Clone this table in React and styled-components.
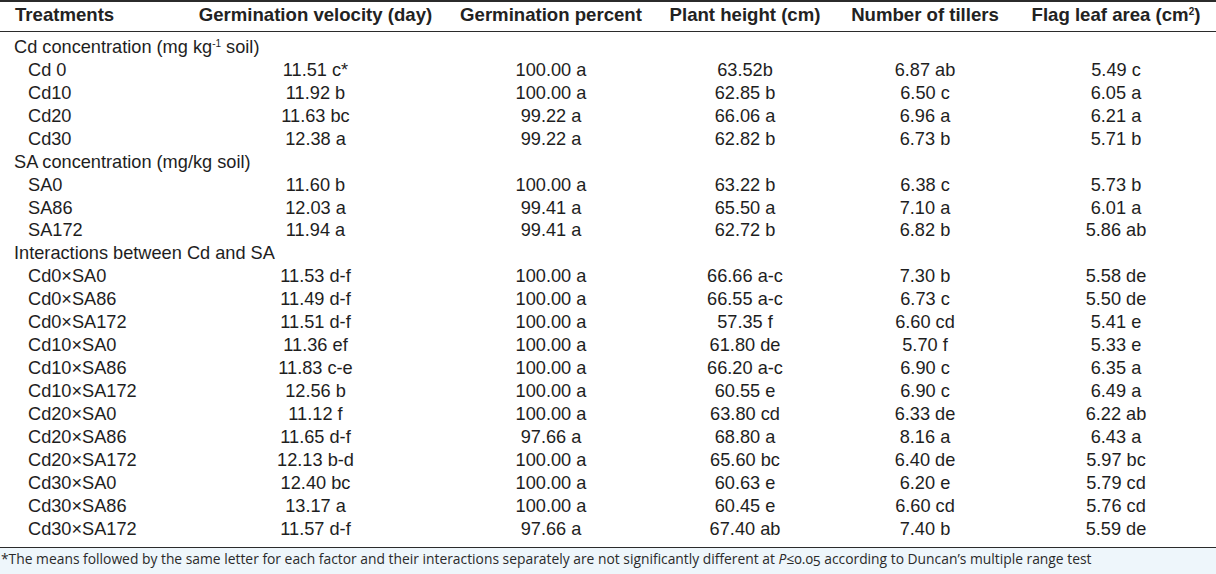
import React from "react";
import styled, { createGlobalStyle } from "styled-components";

const GlobalStyle = createGlobalStyle`
  html, body {
    margin: 0;
    padding: 0;
    background: #ffffff;
  }
  body {
    font-family: "Liberation Sans", Arial, sans-serif;
    color: #1e1e1e;
  }
`;

const columns = "185px 261px 210px 178px 182px 200px";

const TableWrapper = styled.div`
  width: 1216px;
  border-top: 2px solid #2b2b2b;
  font-size: 18.2px;
`;

const HeadRow = styled.div`
  display: grid;
  grid-template-columns: ${columns};
  box-sizing: border-box;
  height: 30px;
  padding-bottom: 3px;
  align-items: center;
  border-bottom: 1.5px solid #2b2b2b;
  font-weight: bold;
  font-size: 18.6px;
  color: #222;
`;

const HeadCell = styled.div`
  text-align: ${(p) => (p.$left ? "left" : "center")};
  padding-left: ${(p) => (p.$left ? "15px" : "0")};
  white-space: nowrap;
`;

const Body = styled.div`
  padding: 4px 0 6px;
  border-bottom: 1px solid #2b2b2b;
`;

const Row = styled.div`
  display: grid;
  grid-template-columns: ${columns};
  height: 22.95px;
  align-items: center;
  white-space: nowrap;
`;

const GroupLabel = styled.div`
  grid-column: 1 / -1;
  padding-left: 14px;
`;

const Label = styled.div`
  padding-left: 28px;
`;

const Value = styled.div`
  text-align: center;
`;

const Sup = styled.sup`
  font-size: 10px;
  vertical-align: 6px;
  line-height: 0;
`;

const Footnote = styled.div`
  background: #eef6fb;
  height: 29px;
  padding: 1px 0 0 1px;
  font-family: "Open Sans", "Noto Sans", sans-serif;
  font-size: 13.85px;
  color: #2a2a2a;
  font-variant-numeric: oldstyle-nums;
  white-space: nowrap;
  box-sizing: border-box;
`;

const groups = [
  {
    title: (
      <>
        Cd concentration (mg kg<Sup>-1</Sup> soil)
      </>
    ),
    rows: [
      ["Cd 0", "11.51 c*", "100.00 a", "63.52b", "6.87 ab", "5.49 c"],
      ["Cd10", "11.92 b", "100.00 a", "62.85 b", "6.50 c", "6.05 a"],
      ["Cd20", "11.63 bc", "99.22 a", "66.06 a", "6.96 a", "6.21 a"],
      ["Cd30", "12.38 a", "99.22 a", "62.82 b", "6.73 b", "5.71 b"],
    ],
  },
  {
    title: "SA concentration (mg/kg soil)",
    rows: [
      ["SA0", "11.60 b", "100.00 a", "63.22 b", "6.38 c", "5.73 b"],
      ["SA86", "12.03 a", "99.41 a", "65.50 a", "7.10 a", "6.01 a"],
      ["SA172", "11.94 a", "99.41 a", "62.72 b", "6.82 b", "5.86 ab"],
    ],
  },
  {
    title: "Interactions between Cd and SA",
    rows: [
      ["Cd0×SA0", "11.53 d-f", "100.00 a", "66.66 a-c", "7.30 b", "5.58 de"],
      ["Cd0×SA86", "11.49 d-f", "100.00 a", "66.55 a-c", "6.73 c", "5.50 de"],
      ["Cd0×SA172", "11.51 d-f", "100.00 a", "57.35 f", "6.60 cd", "5.41 e"],
      ["Cd10×SA0", "11.36 ef", "100.00 a", "61.80 de", "5.70 f", "5.33 e"],
      ["Cd10×SA86", "11.83 c-e", "100.00 a", "66.20 a-c", "6.90 c", "6.35 a"],
      ["Cd10×SA172", "12.56 b", "100.00 a", "60.55 e", "6.90 c", "6.49 a"],
      ["Cd20×SA0", "11.12 f", "100.00 a", "63.80 cd", "6.33 de", "6.22 ab"],
      ["Cd20×SA86", "11.65 d-f", "97.66 a", "68.80 a", "8.16 a", "6.43 a"],
      ["Cd20×SA172", "12.13 b-d", "100.00 a", "65.60 bc", "6.40 de", "5.97 bc"],
      ["Cd30×SA0", "12.40 bc", "100.00 a", "60.63 e", "6.20 e", "5.79 cd"],
      ["Cd30×SA86", "13.17 a", "100.00 a", "60.45 e", "6.60 cd", "5.76 cd"],
      ["Cd30×SA172", "11.57 d-f", "97.66 a", "67.40 ab", "7.40 b", "5.59 de"],
    ],
  },
];

function App() {
  return (
    <>
      <GlobalStyle />
      <TableWrapper>
        <HeadRow>
          <HeadCell $left>Treatments</HeadCell>
          <HeadCell>Germination velocity (day)</HeadCell>
          <HeadCell>Germination percent</HeadCell>
          <HeadCell>Plant height (cm)</HeadCell>
          <HeadCell>Number of tillers</HeadCell>
          <HeadCell>
            Flag leaf area (cm<Sup>2</Sup>)
          </HeadCell>
        </HeadRow>
        <Body>
          {groups.map((group, gi) => (
            <React.Fragment key={gi}>
              <Row>
                <GroupLabel>{group.title}</GroupLabel>
              </Row>
              {group.rows.map((row) => (
                <Row key={row[0]}>
                  <Label>{row[0]}</Label>
                  {row.slice(1).map((v, i) => (
                    <Value key={i}>{v}</Value>
                  ))}
                </Row>
              ))}
            </React.Fragment>
          ))}
        </Body>
        <Footnote>
          *The means followed by the same letter for each factor and their
          interactions separately are not significantly different at{" "}
          <i>P</i>≤0.05 according to Duncan’s multiple range test
        </Footnote>
      </TableWrapper>
    </>
  );
}

export default App;
